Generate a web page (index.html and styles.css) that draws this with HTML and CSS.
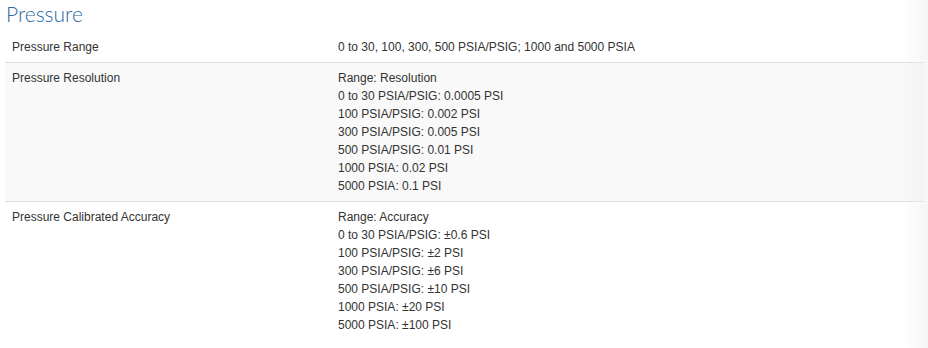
FILE: index.html
```html
<!DOCTYPE html>
<html>
<head>
<meta charset="utf-8">
<link rel="stylesheet" href="styles.css">
</head>
<body>
<div class="page">
  <h2 class="title">Pressure</h2>
  <div class="specs">
    <div class="row">
      <div class="label">Pressure Range</div>
      <div class="value">0 to 30, 100, 300, 500 PSIA/PSIG; 1000 and 5000 PSIA</div>
    </div>
    <div class="row alt">
      <div class="label">Pressure Resolution</div>
      <div class="value">
        <div>Range: Resolution</div>
        <div>0 to 30 PSIA/PSIG: 0.0005 PSI</div>
        <div>100 PSIA/PSIG: 0.002 PSI</div>
        <div>300 PSIA/PSIG: 0.005 PSI</div>
        <div>500 PSIA/PSIG: 0.01 PSI</div>
        <div>1000 PSIA: 0.02 PSI</div>
        <div>5000 PSIA: 0.1 PSI</div>
      </div>
    </div>
    <div class="row last">
      <div class="label">Pressure Calibrated Accuracy</div>
      <div class="value">
        <div>Range: Accuracy</div>
        <div>0 to 30 PSIA/PSIG: ±0.6 PSI</div>
        <div>100 PSIA/PSIG: ±2 PSI</div>
        <div>300 PSIA/PSIG: ±6 PSI</div>
        <div>500 PSIA/PSIG: ±10 PSI</div>
        <div>1000 PSIA: ±20 PSI</div>
        <div>5000 PSIA: ±100 PSI</div>
      </div>
    </div>
  </div>
</div>
<div class="edge"></div>
</body>
</html>
```
FILE: styles.css
```css
html, body {
  margin: 0;
  padding: 0;
  background: #fff;
}
.page {
  padding: 0 4px 0 5px;
  font-family: "Liberation Sans", Arial, sans-serif;
  font-size: 12px;
  line-height: 18px;
  color: #333;
}
.title {
  margin: 0;
  height: 32px;
  padding-left: 1px;
  font-family: Lato, "Open Sans", sans-serif;
  font-weight: 300;
  font-size: 21px;
  line-height: 28px;
  color: #2a6aa5;
}
.specs {
  display: flex;
  flex-direction: column;
}
.row {
  display: grid;
  grid-template-columns: 326px 1fr;
  border-bottom: 1px solid #ddd;
  padding: 6px 0 6px;
}
.row.alt {
  background: #f9f9f9;
}
.row.last {
  border-bottom: none;
}
.label, .value {
  padding: 0 7px;
}
.edge {
  position: fixed;
  top: 0;
  right: 0;
  width: 26px;
  height: 100%;
  background: linear-gradient(to right, rgba(240,240,240,0), rgba(238,238,238,0.55));
  pointer-events: none;
}
```
